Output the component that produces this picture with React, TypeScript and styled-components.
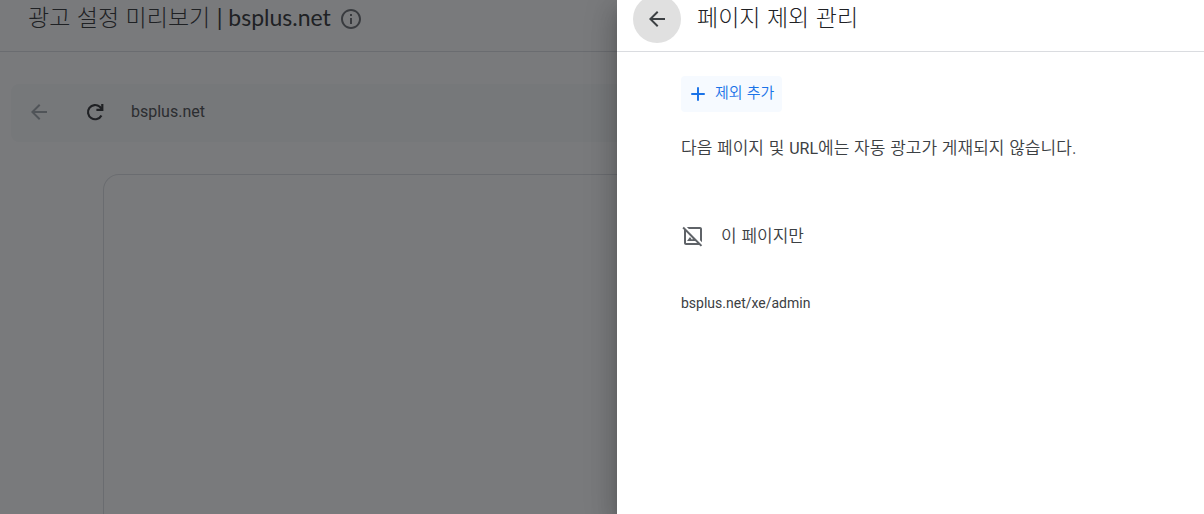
import React from "react";
import styled, { createGlobalStyle } from "styled-components";

const GlobalStyle = createGlobalStyle`
  * { box-sizing: border-box; }
  body {
    margin: 0;
    background: #fff;
    color: #3c4043;
    font-family: Roboto, "Noto Sans CJK KR", sans-serif;
    font-size: 16px;
    line-height: 24px;
  }
`;

const Screen = styled.div`
  position: relative;
  height: 100vh;
  overflow: hidden;
`;

const Preview = styled.main`
  display: flex;
  flex-direction: column;
  height: 100%;
`;

const Header = styled.header<{ $inset: number; $gap: number }>`
  display: flex;
  flex: none;
  align-items: center;
  gap: ${(p) => p.$gap}px;
  height: 65px;
  margin-top: -13px;
  padding: 0 ${(p) => p.$inset}px;
  border-bottom: 1px solid #dadce0;
`;

const Title = styled.h1`
  margin: 0;
  padding-bottom: 3px;
  color: #202124;
  font-family: Inter, "Noto Sans CJK KR", sans-serif;
  font-size: 23px;
  font-weight: 300;
  line-height: 32px;
  white-space: nowrap;
`;

const SiteName = styled.span`
  font-family: Lato, sans-serif;
  font-weight: 400;
`;

const IconButton = styled.button<{ $size: number; $fill?: string; $color?: string }>`
  display: flex;
  flex: none;
  align-items: center;
  justify-content: center;
  width: ${(p) => p.$size}px;
  height: ${(p) => p.$size}px;
  padding: 0;
  border: 0;
  border-radius: 50%;
  background: ${(p) => p.$fill ?? "transparent"};
  color: ${(p) => p.$color ?? "#3c4043"};
`;

const AddressBar = styled.div`
  display: flex;
  flex: none;
  align-items: center;
  gap: 16px;
  height: 58px;
  margin: 32px 11px 0;
  padding: 0 8px 2px;
  border-radius: 8px;
  background: #f8f9fa;
`;

const Frame = styled.section`
  flex: 1;
  margin: 32px 103px 0;
  border: 1px solid #dadce0;
  border-bottom: 0;
  border-radius: 16px 16px 0 0;
`;

const Scrim = styled.div`
  position: absolute;
  inset: 0;
  background: rgba(32, 33, 36, 0.6);
`;

const Drawer = styled.aside`
  position: absolute;
  top: 0;
  right: 0;
  bottom: 0;
  width: calc(50% - 15px);
  background: #fff;
  box-shadow:
    0 8px 10px -5px rgba(0, 0, 0, 0.2),
    0 16px 24px 2px rgba(0, 0, 0, 0.14),
    0 6px 30px 5px rgba(0, 0, 0, 0.12);
`;

const DrawerBody = styled.div`
  display: flex;
  flex-direction: column;
  align-items: flex-start;
  padding: 24px 64px;
`;

const AddButton = styled.button`
  display: flex;
  align-items: center;
  gap: 8px;
  height: 36px;
  padding: 0 8px;
  border: 0;
  border-radius: 4px;
  background: #f6faff;
  color: #1a73e8;
  font: 350 15px/20px Inter, "Noto Sans CJK KR", sans-serif;
`;

const AddLabel = styled.span`
  padding-bottom: 2px;
`;

const Message = styled.p`
  margin: 24px 0 0;
  font-family: Inter, "Noto Sans CJK KR", sans-serif;
  font-size: 17px;
  font-weight: 350;
`;

const Latin = styled.span`
  font-family: Roboto, sans-serif;
  font-size: 16px;
  font-weight: 400;
`;

const Scope = styled.h2`
  display: flex;
  align-items: center;
  gap: 16px;
  margin: 63px 0 0;
  font-family: Inter, "Noto Sans CJK KR", sans-serif;
  font-size: 17px;
  font-weight: 350;

  svg {
    color: #5f6368;
  }
`;

const PageList = styled.ul`
  margin: 43px 0 0;
  padding: 0;
  list-style: none;
  font-size: 14px;
`;

const Icon = ({ size = 24, children }: { size?: number; children: React.ReactNode }) => (
  <svg width={size} height={size} viewBox="0 0 24 24" fill="currentColor" aria-hidden="true">
    {children}
  </svg>
);

const BackIcon = () => (
  <Icon>
    <path d="M20 11H7.83l5.59-5.59L12 4l-8 8 8 8 1.41-1.41L7.83 13H20v-2z" />
  </Icon>
);

export default function App() {
  return (
    <>
      <GlobalStyle />
      <Screen>
        <Preview>
          <Header $inset={28} $gap={0}>
            <Title>
              광고 설정 미리보기 <SiteName>| bsplus.net</SiteName>
            </Title>
            <IconButton $size={40} $color="#5f6368" aria-label="정보">
              <Icon>
                <path d="M11 7h2v2h-2zm0 4h2v6h-2zm1-9C6.48 2 2 6.48 2 12s4.48 10 10 10 10-4.48 10-10S17.52 2 12 2zm0 18c-4.41 0-8-3.59-8-8s3.59-8 8-8 8 3.59 8 8-3.59 8-8 8z" />
              </Icon>
            </IconButton>
          </Header>
          <AddressBar>
            <IconButton $size={40} $color="#9aa0a6" aria-label="뒤로">
              <BackIcon />
            </IconButton>
            <IconButton $size={40} $color="#202124" aria-label="새로고침">
              <Icon>
                <path d="M18.4 15.4A7.1 7.1 0 1 1 16.8 6.8L18.8 9" fill="none" stroke="currentColor" strokeWidth="2.2" />
                <path d="M20.4 4v7h-7V8.8h4.8V4z" />
              </Icon>
            </IconButton>
            <span>bsplus.net</span>
          </AddressBar>
          <Frame />
        </Preview>
        <Scrim />
        <Drawer>
          <Header $inset={16} $gap={16}>
            <IconButton $size={48} $fill="#e0e0e0" aria-label="뒤로">
              <BackIcon />
            </IconButton>
            <Title as="h2">페이지 제외 관리</Title>
          </Header>
          <DrawerBody>
            <AddButton>
              <Icon size={18}>
                <path d="M21 13.3h-7.7V21h-2.6v-7.7H3v-2.6h7.7V3h2.6v7.7H21z" />
              </Icon>
              <AddLabel>제외 추가</AddLabel>
            </AddButton>
            <Message>
              다음 페이지 및 <Latin>URL</Latin>에는 자동 광고가 게재되지 않습니다.
            </Message>
            <Scope>
              <Icon>
                <path d="M19 5v11.17l2 2V5c0-1.1-.9-2-2-2H5.83l2 2H19zM2.81 2.81 1.39 4.22 3 5.83V19c0 1.1.9 2 2 2h13.17l1.61 1.61 1.41-1.41L2.81 2.81zM5 19V7.83l6.84 6.84-.84 1.05L9 13l-3 4h8.17l2 2H5z" />
              </Icon>
              이 페이지만
            </Scope>
            <PageList>
              <li>bsplus.net/xe/admin</li>
            </PageList>
          </DrawerBody>
        </Drawer>
      </Screen>
    </>
  );
}
